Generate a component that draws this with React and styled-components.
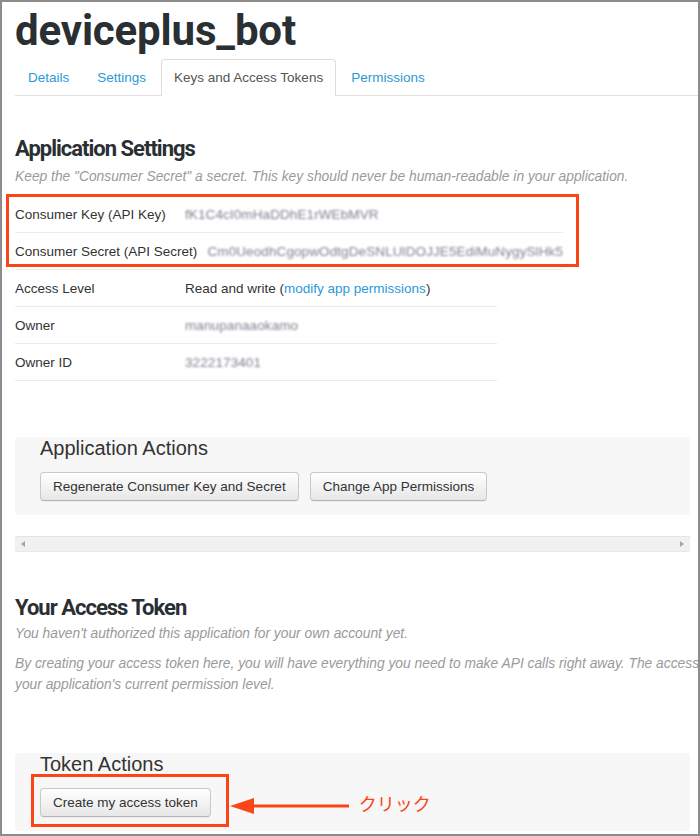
import React from "react";
import styled, { createGlobalStyle } from "styled-components";

const GlobalStyle = createGlobalStyle`
  html, body {
    margin: 0;
    padding: 0;
    background: #fff;
  }
  body {
    font-family: "Liberation Sans", Arial, sans-serif;
  }
`;

const Frame = styled.div`
  width: 700px;
  height: 836px;
  box-sizing: border-box;
  border: 2px solid #8c8c8c;
  overflow: hidden;
  background: #fff;
  padding-left: 13px;
  color: #333;
  font-family: "Liberation Sans", Arial, sans-serif;
`;

const Title = styled.h1`
  margin: 6px 0 0;
  font-family: Roboto, "Liberation Sans", sans-serif;
  font-weight: 700;
  font-size: 42px;
  line-height: 46px;
  letter-spacing: -0.15px;
  color: #292f33;
`;

const Tabs = styled.nav`
  display: flex;
  margin-top: 5px;
  border-bottom: 1px solid #e1e1e1;
`;

const Tab = styled.a`
  display: block;
  margin: 0 2px -1px 0;
  padding: 8px 12px 9px;
  font-size: 13.5px;
  line-height: 19px;
  border: 1px solid ${(p) => (p.$active ? "#dddddd" : "transparent")};
  border-bottom: none;
  border-radius: 4px 4px 0 0;
  color: ${(p) => (p.$active ? "#555" : "#2a9ad6")};
  background: ${(p) => (p.$active ? "#fff" : "transparent")};
  text-decoration: none;
`;

const SectionTitle = styled.h2`
  margin: ${(p) => p.$top}px 0 0;
  font-family: Roboto, "Liberation Sans", sans-serif;
  font-weight: 700;
  font-size: 22px;
  line-height: 26px;
  letter-spacing: -1px;
  color: #292f33;
`;

const Note = styled.p`
  margin: ${(p) => p.$top || 0}px 0 0;
  font-size: 13.8px;
  font-style: italic;
  line-height: ${(p) => p.$lh || 18}px;
  color: #9a9a9a;
  white-space: nowrap;
`;

const KeyTable = styled.div`
  position: relative;
  width: ${(p) => p.$width}px;
  margin-top: ${(p) => p.$top || 0}px;
`;

const Row = styled.div`
  display: flex;
  align-items: center;
  height: 36px;
  border-bottom: 1px solid #ebebeb;
  font-size: 13.5px;
  white-space: nowrap;
`;

const Label = styled.span`
  min-width: 156px;
  margin-right: 14px;
  color: #333;
`;

const Value = styled.span`
  color: #333;
`;

// masked credentials: shown smeared, as in the screenshot
const Hidden = styled.span`
  color: #7d828f;
  filter: blur(1.1px);
  letter-spacing: 0.1px;
`;

const TextLink = styled.a`
  color: #2a9ad6;
  text-decoration: none;
`;

const Highlight = styled.div`
  position: absolute;
  left: ${(p) => p.$left}px;
  top: ${(p) => p.$top}px;
  width: ${(p) => p.$w}px;
  height: ${(p) => p.$h}px;
  box-sizing: border-box;
  border: 3px solid #fb4517;
  pointer-events: none;
`;

const Panel = styled.div`
  margin: ${(p) => p.$top}px 8px 0 0;
  padding: 1px 25px 14px;
  background: #f7f7f7;
  border-radius: 4px;
`;

const PanelTitle = styled.h3`
  margin: 0 0 14px;
  font-size: 20px;
  font-weight: normal;
  line-height: 20px;
  color: #333;
`;

const ButtonRow = styled.div`
  display: flex;
  align-items: center;
  gap: ${(p) => p.$gap ?? 11}px;
`;

const Button = styled.button`
  height: 29px;
  box-sizing: border-box;
  padding: 0 12px;
  font-family: "Liberation Sans", Arial, sans-serif;
  font-size: 13.5px;
  color: #333;
  border: 1px solid #c9c9c9;
  border-bottom-color: #b5b5b5;
  border-radius: 4px;
  background: linear-gradient(#ffffff, #e7e7e7);
  box-shadow: 0 1px 1px rgba(0, 0, 0, 0.05);
  cursor: pointer;
`;

const Annotated = styled.span`
  position: relative;
  display: inline-flex;
`;

const Scrollbar = styled.div`
  display: flex;
  align-items: center;
  justify-content: space-between;
  height: 16px;
  box-sizing: border-box;
  margin: 21px 8px 0 0;
  padding: 0 6px;
  background: #f1f1f1;
  border-top: 1px solid #e4e4e4;
  border-bottom: 1px solid #e9e9e9;
`;

const ScrollArrow = styled.span`
  width: 0;
  height: 0;
  border-top: 3.5px solid transparent;
  border-bottom: 3.5px solid transparent;
  ${(p) =>
    p.$dir === "left"
      ? "border-right: 4px solid #a6a6a6;"
      : "border-left: 4px solid #a6a6a6;"}
`;

const Arrow = styled.svg`
  margin: 7px 0 0 19px;
  flex: none;
`;

const Callout = styled.span`
  margin-left: 9px;
  font-family: "Noto Sans CJK JP", "Liberation Sans", sans-serif;
  font-size: 18px;
  line-height: 24px;
  color: #fb4517;
`;

export default function App() {
  return (
    <>
      <GlobalStyle />
      <Frame>
        <Title>deviceplus_bot</Title>
        <Tabs>
          <Tab>Details</Tab>
          <Tab>Settings</Tab>
          <Tab $active>Keys and Access Tokens</Tab>
          <Tab>Permissions</Tab>
        </Tabs>

        <SectionTitle $top={40}>Application Settings</SectionTitle>
        <Note $top={6}>
          Keep the "Consumer Secret" a secret. This key should never be
          human-readable in your application.
        </Note>

        <KeyTable $width={548} $top={10}>
          <Row>
            <Label>Consumer Key (API Key)</Label>
            <Hidden>fK1C4cI0mHaDDhE1rWEbMVR</Hidden>
          </Row>
          <Row>
            <Label>Consumer Secret (API Secret)</Label>
            <Hidden>Cm0UeodhCgopwOdtgDeSNLUlDOJJE5EdiMuNygySlHk5</Hidden>
          </Row>
          <Highlight $left={-9} $top={-2} $w={573} $h={73} />
        </KeyTable>

        <KeyTable $width={482}>
          <Row>
            <Label>Access Level</Label>
            <Value>
              Read and write (<TextLink>modify app permissions</TextLink>)
            </Value>
          </Row>
          <Row>
            <Label>Owner</Label>
            <Hidden>manupanaaokamo</Hidden>
          </Row>
          <Row>
            <Label>Owner ID</Label>
            <Hidden>3222173401</Hidden>
          </Row>
        </KeyTable>

        <Panel $top={56}>
          <PanelTitle>Application Actions</PanelTitle>
          <ButtonRow>
            <Button>Regenerate Consumer Key and Secret</Button>
            <Button>Change App Permissions</Button>
          </ButtonRow>
        </Panel>

        <Scrollbar>
          <ScrollArrow $dir="left" />
          <ScrollArrow $dir="right" />
        </Scrollbar>

        <SectionTitle $top={43}>Your Access Token</SectionTitle>
        <Note $top={4}>
          You haven't authorized this application for your own account yet.
        </Note>
        <Note $top={10} $lh={21}>
          By creating your access token here, you will have everything you need
          to make API calls right away. The access token generated will be
          assigned
          <br />
          your application's current permission level.
        </Note>

        <Panel $top={58}>
          <PanelTitle>Token Actions</PanelTitle>
          <ButtonRow $gap={0}>
            <Annotated>
              <Button>Create my access token</Button>
              <Highlight $left={-9} $top={-14} $w={198} $h={53} />
            </Annotated>
            <Arrow width="120" height="18" viewBox="0 0 120 18">
              <line x1="20" y1="9" x2="119" y2="9" stroke="#fb4517" strokeWidth="3" />
              <polygon points="0,9 24,1 24,17" fill="#fb4517" />
            </Arrow>
            <Callout>クリック</Callout>
          </ButtonRow>
        </Panel>
      </Frame>
    </>
  );
}
